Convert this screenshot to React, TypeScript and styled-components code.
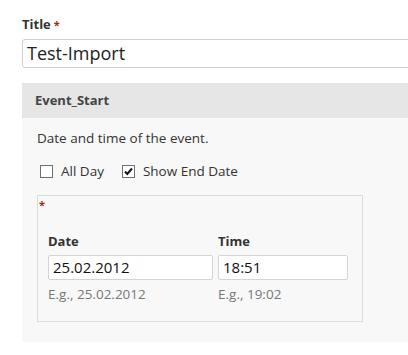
import React from 'react';
import styled, { createGlobalStyle } from 'styled-components';

const GlobalStyle = createGlobalStyle`
  body {
    margin: 0;
    background: #fff;
    overflow: hidden;
    font-family: "Open Sans", "DejaVu Sans", sans-serif;
    color: #333;
  }
`;

const Page = styled.div`
  padding: 15px 0 0 22px;
  width: 440px;
`;

const Label = styled.div`
  font-size: 13px;
  line-height: 18px;
  font-weight: 700;
  color: #333;
`;

const Required = styled.span`
  color: #a8280e;
  font-size: 11px;
  margin-left: 3px;
`;

const TitleInput = styled.div`
  margin-top: 5px;
  height: 27px;
  border: 1px solid #d0d0d0;
  border-radius: 3px;
  background: #fff;
  padding-left: 4px;
  font-size: 18px;
  line-height: 27px;
  color: #222;
`;

const Fieldset = styled.div`
  margin-top: 15px;
`;

const Legend = styled.div`
  height: 35px;
  background: #e6e6e6;
  padding-left: 13px;
  font-size: 13px;
  font-weight: 700;
  line-height: 35px;
  color: #444;
`;

const Body = styled.div`
  background: #f8f8f8;
  padding: 11px 0 20px 15px;
`;

const Description = styled.div`
  font-size: 13.5px;
  line-height: 18px;
  color: #333;
`;

const Options = styled.div`
  display: flex;
  gap: 15px;
  margin-top: 15px;
  font-size: 13.5px;
  line-height: 18px;
`;

const Option = styled.label`
  display: flex;
  align-items: center;
  gap: 8px;
  color: #333;
`;

const Box = styled.span`
  display: inline-flex;
  width: 11px;
  height: 11px;
  border: 1px solid #707070;
  background: #fff;
  margin-left: 3px;
`;

const Group = styled.div`
  margin-top: 15px;
  width: 324px;
  height: 125px;
  border: 1px solid #dcdcdc;
  position: relative;
`;

const GroupStar = styled.span`
  position: absolute;
  left: 1px;
  top: 3px;
  color: #a8280e;
  font-size: 11px;
  line-height: 11px;
  font-weight: 700;
`;

const Fields = styled.div`
  display: flex;
  gap: 5px;
  padding: 36px 0 0 10px;
`;

const Field = styled.div<{ $w: number }>`
  width: ${(p) => p.$w}px;
`;

const SmallInput = styled.div`
  margin-top: 5px;
  height: 23px;
  border: 1px solid #d4d4d4;
  border-radius: 2px;
  background: #fff;
  padding-left: 4px;
  font-size: 15px;
  line-height: 23px;
  color: #111;
`;

const Hint = styled.div`
  margin-top: 5px;
  font-size: 13.5px;
  line-height: 18px;
  color: #777;
`;

const Check = ({ checked }: { checked?: boolean }) => (
  <Box>
    {checked && (
      <svg width="11" height="11" viewBox="0 0 11 11">
        <path d="M2 5.5 L4.3 8 L9 2.5" fill="none" stroke="#111" strokeWidth="2" />
      </svg>
    )}
  </Box>
);

const App: React.FunctionComponent = () => {
  return (
    <Page>
      <GlobalStyle />
      <Label>
        Title<Required>*</Required>
      </Label>
      <TitleInput>Test-Import</TitleInput>
      <Fieldset>
        <Legend>Event_Start</Legend>
        <Body>
          <Description>Date and time of the event.</Description>
          <Options>
            <Option>
              <Check />
              All Day
            </Option>
            <Option>
              <Check checked />
              Show End Date
            </Option>
          </Options>
          <Group>
            <GroupStar>*</GroupStar>
            <Fields>
              <Field $w={165}>
                <Label>Date</Label>
                <SmallInput>25.02.2012</SmallInput>
                <Hint>E.g., 25.02.2012</Hint>
              </Field>
              <Field $w={130}>
                <Label>Time</Label>
                <SmallInput>18:51</SmallInput>
                <Hint>E.g., 19:02</Hint>
              </Field>
            </Fields>
          </Group>
        </Body>
      </Fieldset>
    </Page>
  );
};

export default App;
